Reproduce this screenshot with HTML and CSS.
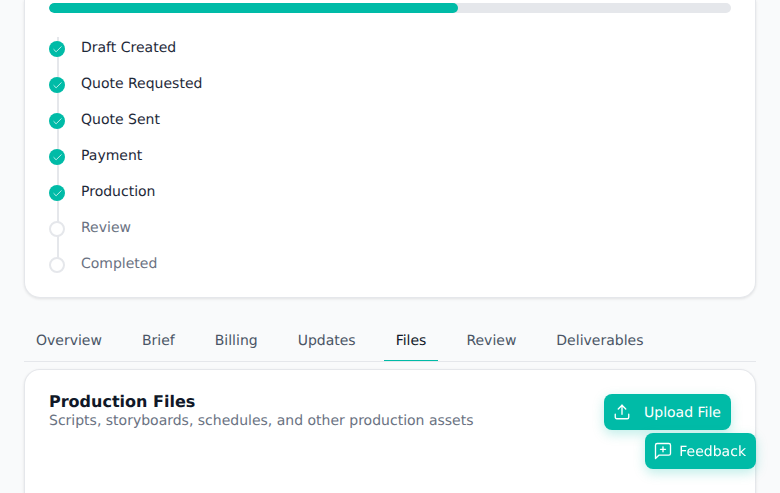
FILE: index.html
```html
<!DOCTYPE html>
<html lang='en'>
<head>
    <meta charset='UTF-8'>
    <meta name='viewport' content='width=device-width, initial-scale=1.0'>
    <title>Project Files</title>
    <link rel="stylesheet" href="styles.css">
</head>
<body>
    <!-- Progress card -->
    <div class='card progress-card'>
        <div class='progress-track'>
            <div class='progress-fill' style='width: 60%'></div>
        </div>
        <ul class='steps'>
            <li class='step done'><span class='dot'><svg width='11' height='11' viewBox='0 0 24 24' fill='none' stroke='currentColor' stroke-width='1.6' stroke-linecap='round' stroke-linejoin='round'><path d='M20 6 9 17l-5-5'/></svg></span><span class='step-label'>Draft Created</span></li>
            <li class='step done'><span class='dot'><svg width='11' height='11' viewBox='0 0 24 24' fill='none' stroke='currentColor' stroke-width='1.6' stroke-linecap='round' stroke-linejoin='round'><path d='M20 6 9 17l-5-5'/></svg></span><span class='step-label'>Quote Requested</span></li>
            <li class='step done'><span class='dot'><svg width='11' height='11' viewBox='0 0 24 24' fill='none' stroke='currentColor' stroke-width='1.6' stroke-linecap='round' stroke-linejoin='round'><path d='M20 6 9 17l-5-5'/></svg></span><span class='step-label'>Quote Sent</span></li>
            <li class='step done'><span class='dot'><svg width='11' height='11' viewBox='0 0 24 24' fill='none' stroke='currentColor' stroke-width='1.6' stroke-linecap='round' stroke-linejoin='round'><path d='M20 6 9 17l-5-5'/></svg></span><span class='step-label'>Payment</span></li>
            <li class='step done'><span class='dot'><svg width='11' height='11' viewBox='0 0 24 24' fill='none' stroke='currentColor' stroke-width='1.6' stroke-linecap='round' stroke-linejoin='round'><path d='M20 6 9 17l-5-5'/></svg></span><span class='step-label'>Production</span></li>
            <li class='step'><span class='dot'></span><span class='step-label'>Review</span></li>
            <li class='step'><span class='dot'></span><span class='step-label'>Completed</span></li>
        </ul>
    </div>

    <!-- Tabs -->
    <div class='tabs'>
        <button class='tab'>Overview</button>
        <button class='tab'>Brief</button>
        <button class='tab'>Billing</button>
        <button class='tab'>Updates</button>
        <button class='tab active'>Files</button>
        <button class='tab'>Review</button>
        <button class='tab'>Deliverables</button>
    </div>

    <!-- Files card -->
    <div class='card files-card'>
        <div class='files-header'>
            <div>
                <h3 class='files-title'>Production Files</h3>
                <p class='files-description'>Scripts, storyboards, schedules, and other production assets</p>
            </div>
            <button class='btn upload-button'>
                <svg width='18' height='18' viewBox='0 0 24 24' fill='none' stroke='currentColor' stroke-width='1.8' stroke-linecap='round' stroke-linejoin='round'><path d='M12 3v12'/><path d='m17 8-5-5-5 5'/><path d='M21 15v4a2 2 0 0 1-2 2H5a2 2 0 0 1-2-2v-4'/></svg>
                <span class='btn-label'>Upload File</span>
            </button>
        </div>
    </div>

    <button class='btn feedback-button'>
        <svg width='20' height='20' viewBox='0 0 24 24' fill='none' stroke='currentColor' stroke-width='1.6' stroke-linecap='round' stroke-linejoin='round'><path d='M21 15a2 2 0 0 1-2 2H7l-4 4V5a2 2 0 0 1 2-2h14a2 2 0 0 1 2 2z'/><path d='M12 7v6'/><path d='M9 10h6'/></svg>
        <span class='btn-label'>Feedback</span>
    </button>
</body>
</html>
```

FILE: styles.css
```css
* {
    box-sizing: border-box;
    margin: 0;
    padding: 0;
    font-family: 'DejaVu Sans', sans-serif;
    text-rendering: geometricPrecision;
}

html, body {
    height: 100%;
    overflow: hidden;
}

body {
    display: flex;
    flex-direction: column;
    background-color: #f9fafb;
    padding: 0 24px;
    color: #101828;
}

.card {
    background-color: #ffffff;
    border: 1px solid #e5e7eb;
    border-radius: 16px;
    box-shadow: 0 1px 3px rgba(0, 0, 0, 0.1);
}

/* Progress card */
.progress-card {
    height: 298px;
    flex-shrink: 0;
    padding: 3px 24px 0;
    border-top: none;
    border-top-left-radius: 0;
    border-top-right-radius: 0;
}

.progress-track {
    height: 10px;
    background-color: #e5e7eb;
    border-radius: 5px;
    overflow: hidden;
}

.progress-fill {
    height: 100%;
    background-color: #00bba7;
    border-radius: 5px;
}

.steps {
    list-style: none;
    position: relative;
    margin-top: 16px;
}

.steps::before {
    content: '';
    position: absolute;
    left: 8px;
    top: 8px;
    width: 2px;
    height: 228px;
    background-color: #e5e7eb;
}

.step {
    position: relative;
    display: flex;
    height: 36px;
    padding-top: 9px;
    font-size: 14px;
    line-height: 20px;
    color: #6a7282;
}

.step.done {
    color: #1e2939;
}

.dot {
    width: 16px;
    height: 16px;
    margin-top: 3px;
    margin-right: 16px;
    display: flex;
    align-items: center;
    justify-content: center;
    flex-shrink: 0;
    border: 2px solid #e5e7eb;
    border-radius: 50%;
    background-color: #ffffff;
    color: #ffffff;
}

.step.done .dot {
    border: none;
    background-color: #00bba7;
}

/* Tabs */
.tabs {
    display: flex;
    flex-shrink: 0;
    gap: 16px;
    height: 41px;
    margin-top: 23px;
    border-bottom: 1px solid #e5e7eb;
}

.tab {
    height: 40px;
    padding: 0 12px;
    background: none;
    border: none;
    font-size: 14px;
    color: #4a5565;
    cursor: pointer;
}

.tab.active {
    color: #101828;
    border-bottom: 1px solid #00bba7;
    padding-top: 1px;
}

/* Files card */
.files-card {
    flex: 1;
    margin-top: 7px;
    padding: 24px;
    border-bottom: none;
    border-bottom-left-radius: 0;
    border-bottom-right-radius: 0;
}

.files-header {
    display: flex;
    justify-content: space-between;
}

.files-title {
    font-size: 16px;
    line-height: 16px;
    font-weight: 700;
    color: #101828;
}

.files-description {
    margin-top: 1px;
    font-size: 14px;
    line-height: 20px;
    color: #6a7282;
}

.btn {
    display: flex;
    align-items: center;
    height: 36px;
    background-color: #00bba7;
    color: #ffffff;
    border: none;
    border-radius: 8px;
    font-size: 14px;
    cursor: pointer;
    box-shadow: 0 4px 12px rgba(0, 187, 167, 0.25);
}

.btn-label {
    padding-top: 2px;
}

.upload-button {
    width: 127px;
    gap: 13px;
    padding: 0 10px 0 9px;
}

.feedback-button {
    position: fixed;
    right: 24px;
    bottom: 24px;
    gap: 6px;
    padding: 0 10px 0 8px;
}
```
